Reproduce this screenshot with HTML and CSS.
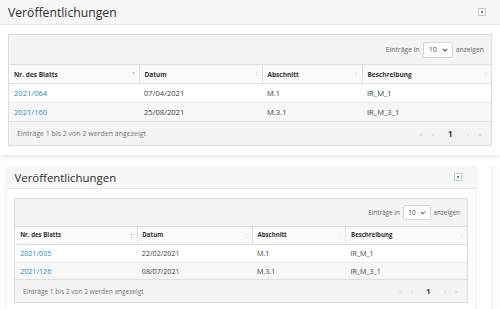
FILE: index.html
```html
<!DOCTYPE html>
<html lang="de">
<head>
    <meta charset="UTF-8"/>
    <title>Veröffentlichungen</title>
    <link rel="stylesheet" href="styles.css">
</head>
<body>
<div class="box">
    <div class="box-header">
        <h3 class="box-title">Veröffentlichungen</h3>
        <span class="box-tool"><span class="box-tool-dot"></span></span>
    </div>
    <div class="box-body">
        <div class="dt">
            <div class="dt-toolbar">
                <span>Einträge in</span>
                <span class="dt-select">10 <svg width="6" height="4" viewBox="0 0 6 4"><path d="M0.8 0.8 L3 3 L5.2 0.8" fill="none" stroke="#555" stroke-width="1.1"/></svg></span>
                <span>anzeigen</span>
            </div>
            <table class="dt-table">
                <colgroup>
                    <col class="col-nr"><col class="col-date"><col class="col-sec"><col>
                </colgroup>
                <thead>
                <tr>
                    <th class="sorted">Nr. des Blatts</th>
                    <th>Datum</th>
                    <th>Abschnitt</th>
                    <th>Beschreibung</th>
                </tr>
                </thead>
                <tbody>
                <tr><td><a href="#">2021/064</a></td><td>07/04/2021</td><td>M.1</td><td>IR_M_1</td></tr>
                <tr><td><a href="#">2021/160</a></td><td>25/08/2021</td><td>M.3.1</td><td>IR_M_3_1</td></tr>
                </tbody>
            </table>
            <div class="dt-footer">
                <span class="dt-info">Einträge 1 bis 2 von 2 werden angezeigt</span>
                <span class="dt-pages"><span>«</span><span>‹</span><b>1</b><span>›</span><span>»</span></span>
            </div>
        </div>
    </div>
</div>

<div class="row">
    <div class="box box-small">
        <div class="box-header">
            <h3 class="box-title">Veröffentlichungen</h3>
            <span class="box-tool"><span class="box-tool-dot"></span></span>
        </div>
        <div class="box-body">
            <div class="dt">
                <div class="dt-toolbar">
                    <span>Einträge in</span>
                    <span class="dt-select">10 <svg width="6" height="4" viewBox="0 0 6 4"><path d="M0.8 0.8 L3 3 L5.2 0.8" fill="none" stroke="#555" stroke-width="1.1"/></svg></span>
                    <span>anzeigen</span>
                </div>
                <table class="dt-table">
                    <colgroup>
                        <col class="col-nr"><col class="col-date"><col class="col-sec"><col>
                    </colgroup>
                    <thead>
                    <tr>
                        <th class="sorted">Nr. des Blatts</th>
                        <th>Datum</th>
                        <th>Abschnitt</th>
                        <th>Beschreibung</th>
                    </tr>
                    </thead>
                    <tbody>
                    <tr><td><a href="#">2021/035</a></td><td>22/02/2021</td><td>M.1</td><td>IR_M_1</td></tr>
                    <tr><td><a href="#">2021/126</a></td><td>08/07/2021</td><td>M.3.1</td><td>IR_M_3_1</td></tr>
                    </tbody>
                </table>
                <div class="dt-footer">
                    <span class="dt-info">Einträge 1 bis 2 von 2 werden angezeigt</span>
                    <span class="dt-pages"><span>«</span><span>‹</span><b>1</b><span>›</span><span>»</span></span>
                </div>
            </div>
        </div>
    </div>
    <div class="box-edge"></div>
</div>
</body>
</html>
```

FILE: styles.css
```css
body {
    margin: 0;
    background-color: #fff;
    font-family: 'Open Sans', 'Noto Sans', sans-serif;
    color: #444;
    overflow: hidden;
}

.box {
    width: 500px;
    background-color: #fff;
    box-shadow: 0 2px 5px rgba(0, 0, 0, 0.10);
}

.box-header {
    height: 25px;
    box-sizing: border-box;
    padding: 0 8px;
    display: flex;
    align-items: center;
    justify-content: space-between;
    background-color: #f7f7f7;
    border-bottom: 1px solid #e6e6e6;
}

.box-title {
    margin: 0;
    font-size: 12.2px;
    font-weight: 400;
    color: #2f2f2f;
}

.box-tool {
    width: 8px;
    height: 8px;
    box-sizing: border-box;
    margin-right: 6px;
    border: 1px solid #c4c4c4;
    border-radius: 1px;
    background-color: #fff;
    display: flex;
    align-items: center;
    justify-content: center;
}

.box-tool-dot {
    width: 2px;
    height: 2px;
    background-color: #3c8dbc;
}

.box-body {
    padding: 9px 8px;
}

.dt {
    border: 1px solid #dcdcdc;
    background-color: #f4f4f4;
}

.dt-toolbar {
    height: 29px;
    display: flex;
    align-items: center;
    justify-content: flex-end;
    gap: 3px;
    padding-right: 7px;
    font-size: 6.8px;
    color: #666;
}

.dt-select {
    width: 30px;
    height: 16px;
    box-sizing: border-box;
    padding: 0 4px 0 5px;
    display: flex;
    align-items: center;
    justify-content: space-between;
    background-color: #fff;
    border: 1px solid #d6d6d6;
    border-radius: 2px;
    font-size: 7px;
    color: #444;
}

.dt-table {
    width: 100%;
    border-collapse: collapse;
    table-layout: fixed;
    background-color: #fff;
    font-size: 7.6px;
}

.col-nr { width: 130px; }
.col-date { width: 123px; }
.col-sec { width: 100px; }

.dt-table th {
    height: 18px;
    padding: 0 5px;
    text-align: left;
    font-size: 6.5px;
    font-weight: 700;
    color: #333;
    background-color: #fafafa;
    border-top: 1px solid #dedede;
    border-bottom: 1px solid #dedede;
    border-right: 1px solid #e2e2e2;
    position: relative;
}

.dt-table th:last-child {
    border-right: none;
}

.dt-table th::after {
    content: "";
    position: absolute;
    right: 5px;
    top: 7px;
    width: 1px;
    height: 1px;
    background-color: #c8c8c8;
    box-shadow: 0 3px 0 #c8c8c8;
}

.dt-table th.sorted::after {
    background-color: #3c8dbc;
    box-shadow: 0 3px 0 #d0d0d0;
}

.dt-table td {
    height: 18px;
    padding: 0 5px;
    border-bottom: 1px solid #e8e8e8;
    color: #3d3d3d;
}

.dt-table tbody tr:nth-child(2) td {
    background-color: #f8f8f8;
    border-bottom: 1px solid #dedede;
}

.dt-table a {
    color: #2a8bc0;
    text-decoration: none;
}

.dt-footer {
    height: 23px;
    display: flex;
    align-items: center;
    justify-content: space-between;
    padding: 0 9px 0 8px;
    font-size: 7px;
    color: #777;
}

.dt-pages {
    display: flex;
    align-items: center;
    gap: 9px;
    font-size: 8px;
    color: #d0d0d0;
}

.dt-pages b {
    color: #333;
    margin: 0 5px;
}

.row {
    display: flex;
    align-items: flex-start;
    gap: 17px;
    margin-top: 11px;
    padding-left: 7px;
}

.box-small {
    flex: none;
    zoom: 0.936;
}

.box-edge {
    flex: none;
    width: 6px;
    height: 150px;
    background-color: #fdfdfd;
    border-left: 1px solid #ececec;
}
```
